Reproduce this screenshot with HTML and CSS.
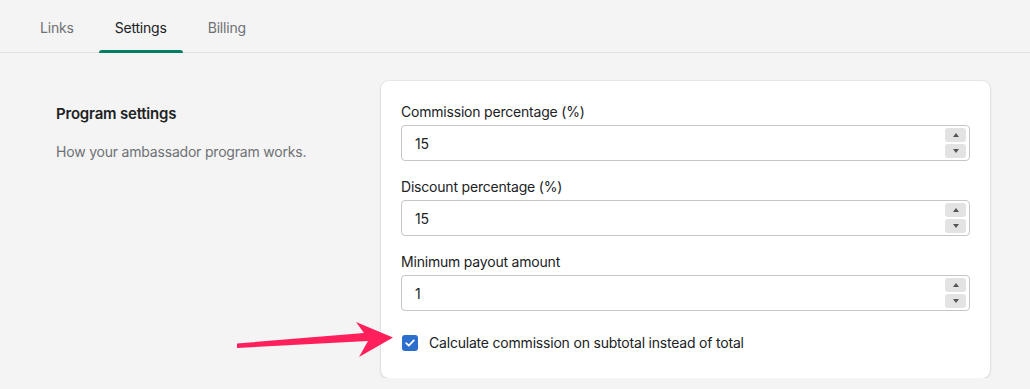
FILE: index.html
```html
<!DOCTYPE html>
<html lang="en">
<head>
    <meta charset="UTF-8">
    <meta name="viewport" content="width=device-width, initial-scale=1.0">
    <title>Ambassador settings</title>
    <link rel="stylesheet" href="styles.css">
</head>
<body>
    <div class="tabs">
        <div class="tab">Links</div>
        <div class="tab active">Settings</div>
        <div class="tab">Billing</div>
    </div>
    <div class="layout">
        <div class="section-info">
            <h2>Program settings</h2>
            <p>How your ambassador program works.</p>
        </div>
        <div class="card">
            <div class="field">
                <label>Commission percentage (%)</label>
                <div class="number-input">
                    <span class="value">15</span>
                    <div class="spinner">
                        <span class="step"><i class="up"></i></span>
                        <span class="step"><i class="down"></i></span>
                    </div>
                </div>
            </div>
            <div class="field">
                <label>Discount percentage (%)</label>
                <div class="number-input">
                    <span class="value">15</span>
                    <div class="spinner">
                        <span class="step"><i class="up"></i></span>
                        <span class="step"><i class="down"></i></span>
                    </div>
                </div>
            </div>
            <div class="field">
                <label>Minimum payout amount</label>
                <div class="number-input">
                    <span class="value">1</span>
                    <div class="spinner">
                        <span class="step"><i class="up"></i></span>
                        <span class="step"><i class="down"></i></span>
                    </div>
                </div>
            </div>
            <div class="checkbox-row">
                <span class="checkbox">
                    <svg width="10" height="8" viewBox="0 0 10 8"><path d="M1.2 4.2 L3.8 6.6 L8.8 1.4" fill="none" stroke="#fff" stroke-width="1.8" stroke-linecap="round" stroke-linejoin="round"/></svg>
                </span>
                <span>Calculate commission on subtotal instead of total</span>
            </div>
        </div>
    </div>
    <svg class="arrow" width="1030" height="389" viewBox="0 0 1030 389">
        <polygon points="237,343.5 364,333 356,322 393,337.5 359,357 368,341 237,348" fill="#fe1f5b"/>
    </svg>
</body>
</html>
```

FILE: styles.css
```css
body {
    margin: 0;
    font-family: Inter, "Noto Sans", sans-serif;
    background-color: #f4f4f4;
    color: #202223;
    font-size: 14px;
    letter-spacing: -0.2px;
}
.tabs {
    display: flex;
    gap: 9px;
    padding-left: 24px;
    height: 53px;
    border-bottom: 1px solid #e1e1e1;
    box-sizing: border-box;
}
.tab {
    padding: 3px 16px 0;
    line-height: 49px;
    color: #6d7175;
    position: relative;
}
.tab.active {
    color: #202223;
}
.tab.active::after {
    content: "";
    position: absolute;
    left: 0;
    right: 0;
    bottom: -1px;
    height: 3px;
    background-color: #008060;
    border-radius: 3px 3px 0 0;
}
.layout {
    display: flex;
    padding: 28px 40px 0 56px;
}
.section-info {
    width: 325px;
    padding-top: 23px;
}
.section-info h2 {
    margin: 0;
    font-size: 15px;
    font-weight: 600;
    line-height: 20px;
}
.section-info p {
    margin: 18px 0 0;
    color: #6d7175;
    line-height: 20px;
}
.card {
    flex: 1;
    background-color: #fff;
    border-radius: 8px;
    box-shadow: 0 0 0 1px rgba(63, 63, 68, 0.05), 0 1px 3px rgba(63, 63, 68, 0.15);
    padding: 21px 20px 24px;
    display: flex;
    flex-direction: column;
    gap: 16px;
}
.field label {
    display: block;
    line-height: 20px;
    margin-bottom: 3px;
}
.number-input {
    display: flex;
    align-items: center;
    height: 36px;
    border: 1px solid #c4c6c9;
    border-radius: 4px;
    padding: 0 3px 0 13px;
    box-sizing: border-box;
}
.number-input .value {
    flex: 1;
}
.spinner {
    display: flex;
    flex-direction: column;
    gap: 2px;
}
.step {
    width: 21px;
    height: 14px;
    background-color: #e3e3e3;
    border-radius: 3px;
    display: flex;
    align-items: center;
    justify-content: center;
}
.step i {
    width: 0;
    height: 0;
    border-left: 3.5px solid transparent;
    border-right: 3.5px solid transparent;
}
.step .up {
    border-bottom: 4px solid #555;
}
.step .down {
    border-top: 4px solid #555;
}
.checkbox-row {
    display: flex;
    align-items: center;
    gap: 11px;
    margin-top: 5px;
    padding-left: 1px;
    line-height: 22px;
}
.checkbox {
    width: 16px;
    height: 16px;
    background-color: #2c6ecb;
    border-radius: 3px;
    display: flex;
    align-items: center;
    justify-content: center;
}
.arrow {
    position: absolute;
    left: 0;
    top: 0;
    pointer-events: none;
}
```
